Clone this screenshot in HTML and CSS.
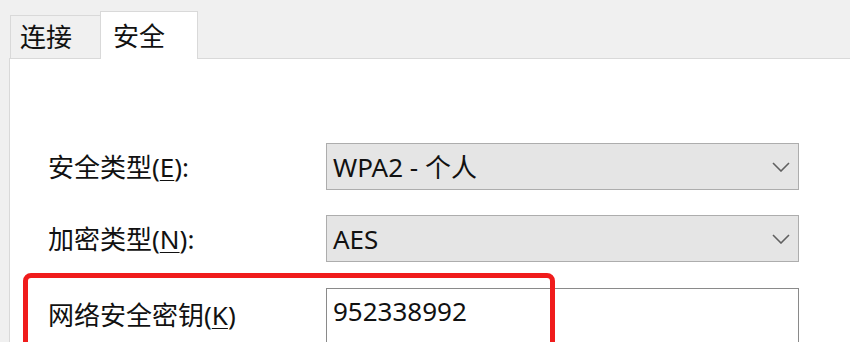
FILE: index.html
```html
<!DOCTYPE html>
<html lang="zh-CN">
<head>
<meta charset="utf-8">
<title>安全</title>
<link rel="stylesheet" href="styles.css">
</head>
<body>
<div class="window">
  <div class="tabs">
    <div class="tab">连接</div>
    <div class="tab active">安全</div>
  </div>
  <div class="panel">
    <div class="form">
      <div class="label">安全类型(<u>E</u>):</div>
      <div class="select">
        <span>WPA2 - 个人</span>
        <svg class="chev" width="18" height="10" viewBox="0 0 18 10"><polyline points="1,1 9,9 17,1" fill="none" stroke="#606060" stroke-width="1.6"/></svg>
      </div>
      <div class="label">加密类型(<u>N</u>):</div>
      <div class="select">
        <span>AES</span>
        <svg class="chev" width="18" height="10" viewBox="0 0 18 10"><polyline points="1,1 9,9 17,1" fill="none" stroke="#606060" stroke-width="1.6"/></svg>
      </div>
      <div class="label key">网络安全密钥(<u>K</u>)</div>
      <div class="input">952338992</div>
      <div class="highlight"></div>
    </div>
  </div>
</div>
</body>
</html>
```
FILE: styles.css
```css
html, body {
  margin: 0;
  padding: 0;
}
body {
  width: 850px;
  height: 342px;
  overflow: hidden;
  background: #f0f0f0;
  font-family: "Noto Sans", "Noto Sans CJK SC", sans-serif;
  font-size: 26px;
  color: #111;
}
.window {
  padding-top: 11px;
  height: 331px;
  display: flex;
  flex-direction: column;
}
.tabs {
  display: flex;
  align-items: flex-end;
  margin-left: 10px;
  position: relative;
  z-index: 1;
}
.tab {
  box-sizing: border-box;
  display: flex;
  align-items: center;
  line-height: 30px;
}
.tab:first-child {
  width: 90px;
  height: 43px;
  padding-left: 9px;
  background: #f0f0f0;
  border: 1px solid #d9d9d9;
  border-right: none;
  border-bottom: none;
}
.tab.active {
  width: 98px;
  height: 48px;
  padding-left: 12px;
  margin-bottom: -1px;
  background: #fff;
  border: 1px solid #d9d9d9;
  border-bottom: none;
}
.panel {
  flex: 1;
  margin-left: 9px;
  background: #fff;
  border-left: 1px solid #d9d9d9;
  border-top: 1px solid #d9d9d9;
  padding: 84px 0 0 38px;
}
.form {
  position: relative;
  display: grid;
  grid-template-columns: 278px 473px;
  grid-template-rows: 47px 47px 70px;
  row-gap: 25px;
}
.form > .input {
  margin-top: 1px;
}
.label {
  align-self: center;
  line-height: 34px;
  white-space: nowrap;
}
.label.key {
  align-self: start;
  margin-top: 11px;
}
.label u {
  text-underline-offset: 3px;
  text-decoration-thickness: 1px;
}
.select {
  box-sizing: border-box;
  display: flex;
  align-items: center;
  justify-content: space-between;
  padding: 0 8px 0 6px;
  background: #e5e5e5;
  border: 1px solid #adadad;
  line-height: 34px;
}
.chev {
  display: block;
}
.input {
  box-sizing: border-box;
  background: #fff;
  border: 1px solid #8a8a8a;
  padding: 5px 6px 0 6px;
  line-height: 34px;
}
.highlight {
  position: absolute;
  left: -25px;
  top: 130px;
  width: 532px;
  height: 120px;
  box-sizing: border-box;
  border: 5px solid #f01c1c;
  border-radius: 8px;
  pointer-events: none;
}
```
